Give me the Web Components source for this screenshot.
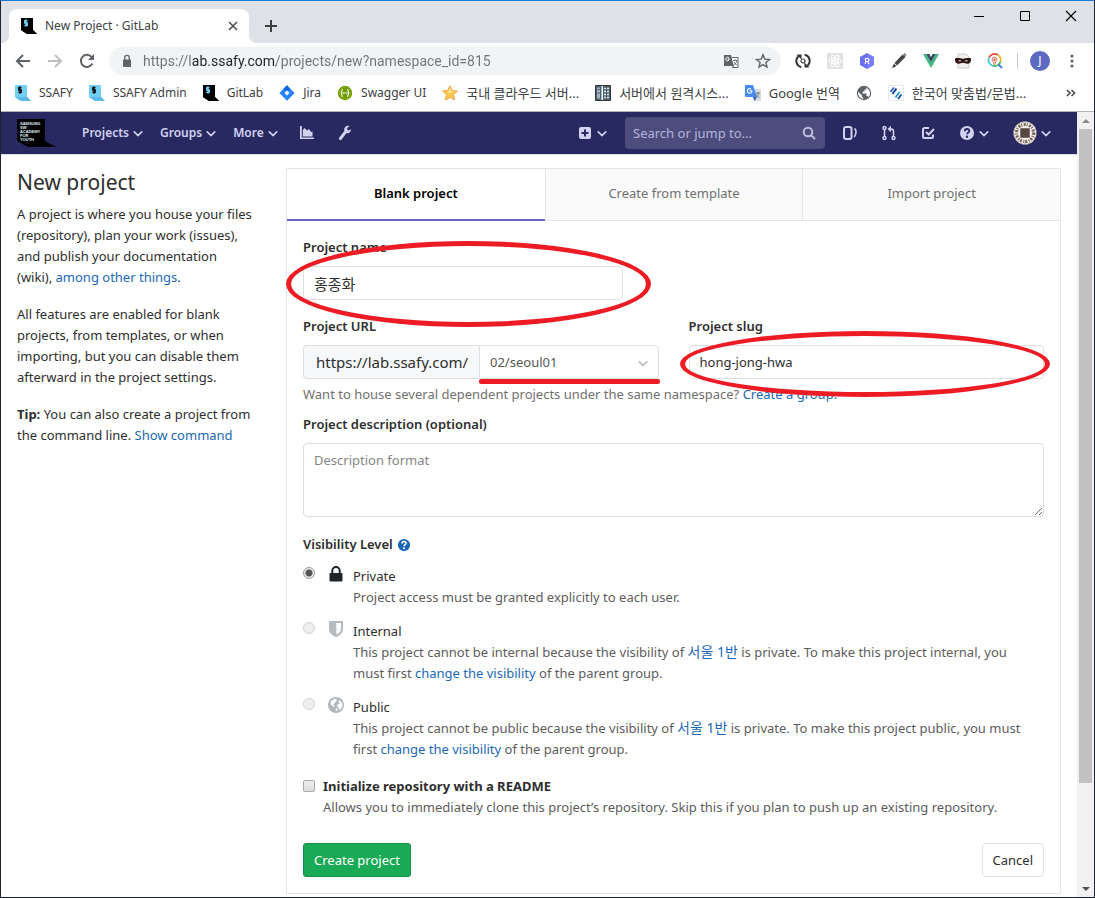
<!DOCTYPE html>
<html lang="en">
<head>
<meta charset="utf-8">
<title>New Project · GitLab</title>
<style>
html, body { margin: 0; }
body {
  font-family: "Noto Sans", "Noto Sans CJK KR", sans-serif;
  font-size: 13px; line-height: 21px; color: #2e2e2e; background: #fff;
}
</style>
</head>
<body>
<browser-window>
  <tab-strip slot="chrome"></tab-strip>
  <address-bar slot="chrome"></address-bar>
  <bookmark-bar slot="chrome"></bookmark-bar>
  <gl-navbar></gl-navbar>
  <gl-layout>
    <gl-intro slot="aside"></gl-intro>
    <gl-panel>
      <gl-project-form></gl-project-form>
    </gl-panel>
  </gl-layout>
</browser-window>

<script>
const define = (name, html) => {
  const template = document.createElement('template');
  template.innerHTML = html;
  customElements.define(name, class extends HTMLElement {
    constructor() {
      super();
      this.attachShadow({ mode: 'open' }).append(template.content.cloneNode(true));
    }
  });
};

/* ---------- icons ---------- */
const ssafy = (bg, fg, shade) => `<path d="M0 0h12v12l4 4H6l-6-4z" fill="${bg}"/><path d="M0 12h12l4 4H6z" fill="${shade}"/><path d="M6.500 2.700H3.700v2.300h2.600v2.400H3.300M5 1.300v7.500" fill="none" stroke="${fg}" stroke-width="1.300"/>`;
const ICONS = {
  ssafyDark: ['0 0 16 16', ssafy('#000', '#6fd0f5', '#000')],
  ssafyLight: ['0 0 16 16', ssafy('#6fcff6', '#111', '#5bb9e8')],
  x: ['0 0 16 16', '<path d="M4 4l8 8M12 4l-8 8" stroke="#4a4d51" stroke-width="1.600"/>'],
  plus: ['0 0 16 16', '<path d="M8 2v12M2 8h12" stroke="#3c4043" stroke-width="2"/>'],
  min: ['0 0 16 16', '<path d="M3 8.500h10" stroke="#000"/>'],
  max: ['0 0 16 16', '<path d="M3.500 3.500h9v9h-9z" fill="none" stroke="#000"/>'],
  close: ['0 0 16 16', '<path d="M3 3l10 10M13 3L3 13" stroke="#000" stroke-width="1.100"/>'],
  back: ['0 0 16 16', '<path d="M15 8H2.500M8 2L2 8l6 6" fill="none" stroke="#5f6368" stroke-width="2"/>'],
  fwd: ['0 0 16 16', '<path d="M1 8h12.500M8 2l6 6-6 6" fill="none" stroke="#bcbec1" stroke-width="2"/>'],
  reload: ['0 0 16 16', '<path d="M13.300 10.500A6 6 0 1 1 12.500 4" fill="none" stroke="#5f6368" stroke-width="2"/><path d="M15 1v6H9z" fill="#5f6368"/>'],
  padlock: ['0 0 16 16', '<rect x="4" y="6.500" width="8" height="7.500" rx=".8" fill="#5f6368"/><path d="M5.700 7V4.700a2.300 2.300 0 0 1 4.600 0V7" fill="none" stroke="#5f6368" stroke-width="1.300"/>'],
  translate: ['0 0 16 16', '<path d="M1 2h7l3 11H1z" fill="#5f6368"/><path d="M8.500 4.500H15v10H9l2-1.500" fill="#fff" stroke="#5f6368"/><path d="M6.800 6H5.200v1.200h.8A1.800 1.800 0 1 1 6 5" fill="none" stroke="#fff"/><path d="M10 7.500h4.500M12.300 6.500v1M13.700 8c-.5 2-1.500 3-3 4M11 9c.5 1.500 1.500 2.500 3 3" fill="none" stroke="#5f6368" stroke-width=".9"/>'],
  star: ['0 0 16 16', '<path d="M8 1.800l1.800 4.300 4.700.4-3.600 3 1.100 4.600L8 11.600l-4 2.500 1.100-4.600-3.600-3 4.700-.4z" fill="none" stroke="#5f6368" stroke-width="1.400"/>'],
  sync: ['0 0 16 16', '<path d="M6.300 14.200A6.300 6.300 0 0 1 3.500 3.300M9.700 1.800a6.300 6.300 0 0 1 2.800 10.900" fill="none" stroke="#333" stroke-width="2"/><path d="M1.500 1.500h5V6.500zM14.500 14.500h-5V9.500z" fill="#333"/><circle cx="8" cy="8" r="2" fill="none" stroke="#444" stroke-width="1.200"/>'],
  react: ['0 0 16 16', '<path d="M0 0h16v16H0z" fill="#e2e2e2"/><g fill="none" stroke="#fff"><ellipse cx="8" cy="8" rx="6.300" ry="2.400"/><ellipse cx="8" cy="8" rx="6.300" ry="2.400" transform="rotate(60 8 8)"/><ellipse cx="8" cy="8" rx="6.300" ry="2.400" transform="rotate(120 8 8)"/></g><circle cx="8" cy="8" r="1.300" fill="#fff"/>'],
  hex: ['0 0 16 16', '<path d="M8 0l7 4v8l-7 4-7-4V4z" fill="#6a6ff2"/><path d="M8 0l7 4v8l-7 4z" fill="#8287ff" opacity=".6"/><path d="M6.500 11V5.500h2a1.400 1.400 0 0 1 0 3h-2M8.500 8.500L10 11" fill="none" stroke="#fff" stroke-width="1.200"/>'],
  pen: ['0 0 16 16', '<path d="M11.500 1.500l3 2.500L6 12.500 3.500 10z" fill="#444"/><path d="M13.500 0l2 2-1 1.500-2.500-2z" fill="#777"/><path d="M3 10.700L5.300 13 .8 15.300z" fill="#333"/>'],
  vue: ['0 0 16 16', '<path d="M0 1h3.300L8 9.200 12.700 1H16L8 15z" fill="#41b883"/><path d="M3.300 1h3L8 4l1.700-3h3L8 9.200z" fill="#35495e"/>'],
  mask: ['0 0 16 16', '<path d="M3 1h8l3 3v11H3z" fill="#f0f0f0" stroke="#ccc"/><path d="M0 5.500c3-1.200 5 .2 8 .2s5-1.400 8-.2c.3 3-.8 5-3 5.300-2 .2-3.500-1-5-1s-3 1.200-5 1C.8 10.500-.3 8.500 0 5.500z" fill="#2b1313"/><path d="M3 8.200c1.200-1.200 2.400-1 3.500 0zM9.500 8.200c1.200-1 2.400-1.200 3.500 0z" fill="#fff"/>'],
  lens: ['0 0 16 16', '<g fill="none" stroke-width="1.800"><path d="M2 4.500A6.200 6.200 0 0 1 11 2" stroke="#ea4c3d"/><path d="M11 2a6.200 6.200 0 0 1 2.500 6.500" stroke="#f6b829"/><path d="M2 4.500A6.200 6.200 0 0 0 6 13" stroke="#42c6d8"/><path d="M6 13a6.200 6.200 0 0 0 7.500-4.500" stroke="#57b957"/><path d="M11.500 11.500l3.500 3.500" stroke="#3c82e8" stroke-width="2"/></g><path d="M5 6L7.500 12l2.500-6a2.600 2.600 0 0 0-5 0z" fill="#f6d7cf" stroke="#d55a48" stroke-width=".8"/><circle cx="7.500" cy="6.500" r="1" fill="#d55a48"/>'],
  kebab: ['0 0 16 16', '<g fill="#5f6368"><circle cx="8" cy="3" r="1.600"/><circle cx="8" cy="8" r="1.600"/><circle cx="8" cy="13" r="1.600"/></g>'],
  jira: ['0 0 16 16', '<path d="M8 .3L15.700 8 8 15.700.3 8z" fill="#2684ff"/><path d="M8 .3L11 4 8 6 4.300 4z" fill="#1264e0"/><path d="M8 5.600L10.400 8 8 10.400 5.600 8z" fill="#fff"/>'],
  swagger: ['0 0 16 16', '<circle cx="8" cy="8" r="7.200" fill="#6d9a00"/><circle cx="8" cy="8" r="5.800" fill="none" stroke="#85b510" stroke-width=".8"/><path d="M6 4.500c-2 0-.5 3.500-2.300 3.500C5.500 8 4 11.500 6 11.500M10 4.500c2 0 .5 3.500 2.300 3.500-1.800 0-.3 3.500-2.300 3.500" fill="none" stroke="#fff" stroke-width="1.100"/><path d="M5.600 8h5" stroke="#fff" stroke-width="1.300" stroke-dasharray="1.200 .7"/>'],
  gold: ['0 0 16 16', '<path d="M8 .8l2.200 4.600 5.300.6-4 3.600 1.200 5.400L8 12.400 3.300 15l1.200-5.400-4-3.600 5.300-.6z" fill="#fbc64c" stroke="#e29a3a" stroke-width=".8"/><path d="M8 3l1.300 3.500 3.500.5-6.800 1z" fill="#ffe6a0"/>'],
  rack: ['0 0 16 16', '<path d="M.5.500h15v15H.5z" fill="#4d6270" stroke="#333"/><path d="M6.500 1h1.500v14H6.500z" fill="#fff"/><path d="M2 2.500h3v11H2z" fill="#9fb2bd"/><path d="M9 3.500h2M12 3.500h2M9 6.500h2M12 6.500h2M9 9.500h2M12 9.500h2M9 12.500h2M12 12.500h2" stroke="#dfe7eb" stroke-width="1.600"/><path d="M2.800 4.500h1.500M2.800 8h1.500" stroke="#26333b"/>'],
  gtrans: ['0 0 16 16', '<path d="M7 4h9v12H9z" fill="#dadce0"/><path d="M0 0h8l4 12H1a1 1 0 0 1-1-1z" fill="#4a8af4"/><path d="M8 12h4l-2.500 4z" fill="#2f5fc4"/><path d="M7 5.800H4.700M7 5.800A2.300 2.300 0 1 1 6 4" fill="none" stroke="#fff" stroke-width="1.100"/><path d="M10.500 8H15M12.800 7v1M14 8c-.5 2-1.500 3-2.500 4M11.500 9.500c.7 1.500 1.500 2.300 3 3" fill="none" stroke="#69757d" stroke-width=".9"/>'],
  globe: ['0 0 16 16', '<circle cx="8" cy="8" r="7.200" fill="#5f6368"/><path d="M9.500 2.500L11 4.500H8.500v2H6.500v2h4V11c1.200 0 1.800.5 2 1.300A6 6 0 0 0 9.500 2.500zM2.200 6.800L6 10.500v1.200l1.300 1.300v1A6 6 0 0 1 2.200 6.800z" fill="#fff"/>'],
  spell: ['0 0 16 16', '<path d="M.5.500h15v15H.5z" fill="#fff" stroke="#e8e8e8"/><g stroke-width="2"><path d="M2.500 7l3.500-4.500" stroke="#2f6fd0"/><path d="M4.500 9l4-5.500" stroke="#223f86"/><path d="M7.500 12.500l4-5.500" stroke="#2799cf"/><path d="M10 14l3.500-4.500" stroke="#2450a0"/></g>'],
  more: ['0 0 16 16', '<path d="M5 5l3 3-3 3M9.500 5l3 3-3 3" fill="none" stroke="#4d5156" stroke-width="1.700"/>'],
  down: ['0 0 16 16', '<path d="M3 6.500L8 11.500l5-5" fill="none" stroke="currentColor" stroke-width="2.200" stroke-linecap="round"/>'],
  chart: ['0 0 16 16', '<path d="M1 1h1.800v11.500H15V14H1z" fill="currentColor"/><path d="M3.800 11.500V5L5.500 3l2.500 2.500L10 4l2 3 1.500-.5v5z" fill="currentColor"/>'],
  wrench: ['0 0 16 16', '<path d="M14 4.200l-2.500 1.300-1.400-1L10.200 3 12.600 1A4 4 0 0 0 7.300 6L2.300 12.600a1.500 1.500 0 0 0 .2 2.200 1.500 1.500 0 0 0 2.100-.3L9.300 8.300A4 4 0 0 0 14 4.200z" fill="currentColor"/>'],
  plusSq: ['0 0 16 16', '<path fill-rule="evenodd" d="M4 2h8a2 2 0 0 1 2 2v8a2 2 0 0 1-2 2H4a2 2 0 0 1-2-2V4a2 2 0 0 1 2-2zm3 2.500V7H4.500v2H7v2.500h2V9h2.500V7H9V4.500z" fill="currentColor"/>'],
  search: ['0 0 16 16', '<circle cx="7" cy="7" r="4.300" fill="none" stroke="currentColor" stroke-width="2"/><path d="M10.500 10.500l3 3" stroke="currentColor" stroke-width="2" stroke-linecap="round"/>'],
  issues: ['0 0 16 16', '<rect x="2" y="2" width="7.500" height="12" rx="2" fill="none" stroke="currentColor" stroke-width="2"/><path d="M12.500 3.500c1.500 1 1.800 2 1.500 4-.2 2-.8 3.200-1.800 4.500" fill="none" stroke="currentColor" stroke-width="1.600"/>'],
  merge: ['0 0 16 16', '<g fill="none" stroke="currentColor" stroke-width="1.500"><circle cx="3.500" cy="3" r="1.500"/><circle cx="3.500" cy="13" r="1.500"/><circle cx="12.500" cy="13" r="1.500"/><path d="M3.500 4.500v7M12.500 11.500V6.500a2.500 2.500 0 0 0-2.500-2.500H8"/></g><path d="M10 .8v6.400L6.500 4z" fill="currentColor"/>'],
  todo: ['0 0 16 16', '<path d="M9 3H4.500A1.500 1.500 0 0 0 3 4.500v7A1.500 1.500 0 0 0 4.500 13h7a1.500 1.500 0 0 0 1.500-1.500V9.500M6 7l2.700 2.500L14 4" fill="none" stroke="currentColor" stroke-width="2"/>'],
  help: ['0 0 16 16', '<circle cx="8" cy="8" r="7" fill="currentColor"/><path d="M5.800 6.300C5.800 4.800 6.800 4 8 4s2.300.8 2.300 2c0 1.500-2.200 1.500-2.200 3.300" fill="none" stroke="var(--mark, #fff)" stroke-width="1.800"/><circle cx="8" cy="11.700" r="1.200" fill="var(--mark, #fff)"/>'],
  avatar: ['0 0 24 24', '<circle cx="12" cy="12" r="11.500" fill="#efeae6"/><circle cx="12" cy="12" r="8.500" fill="none" stroke="#75635a" stroke-width="3" stroke-dasharray="2 1 1 1.500"/><circle cx="12" cy="12" r="11" fill="none" stroke="#9a8e86" stroke-width="1" stroke-dasharray="2 2"/><path d="M7 7h10v10H7z" fill="#5b463f" stroke="#fff" stroke-width=".5"/>'],
  lock: ['0 0 16 16', '<path d="M1.500 8a1 1 0 0 1 1-1h11a1 1 0 0 1 1 1v6.500a1 1 0 0 1-1 1h-11a1 1 0 0 1-1-1z" fill="#1f2429"/><path d="M4.300 7.500V4.800a3.700 3.700 0 0 1 7.400 0v2.700" fill="none" stroke="#1f2429" stroke-width="2"/>'],
  shield: ['0 0 16 16', '<path d="M2 0h12a1 1 0 0 1 1 1v7c0 4-3 6.500-7 8-4-1.500-7-4-7-8V1a1 1 0 0 1 1-1z" fill="#b5babf"/><path d="M8.300 2H13v6c0 2.700-1.800 4.300-4.700 5.700z" fill="#fff"/>'],
  earth: ['0 0 16 16', '<circle cx="8" cy="8" r="8" fill="#b1b6ba"/><path d="M6 2l3-.5L8 3l1 .8L7.500 5 6.500 6.500 5 7l1.500 1.500L6 10 4 8.500 2.500 6.500 2.800 4.500zM11 3l3 2.500.7 3L13 12l-1.500 1-1-2.500L9 9l1-2 2-.5L10.500 5zM8 11l2 1-1.500 2.500-1-1.500z" fill="#fff"/>'],
};
customElements.define('ui-icon', class extends HTMLElement {
  constructor() { super(); this.attachShadow({ mode: 'open' }); }
  connectedCallback() {
    const [box, body] = ICONS[this.getAttribute('name')];
    const size = this.getAttribute('size') || 16;
    this.shadowRoot.innerHTML = `<style>:host{display:inline-flex;flex:none}svg{display:block}</style>
      <svg viewBox="${box}" width="${size}" height="${size}" aria-hidden="true">${body}</svg>`;
  }
});

const RESET = `
  *, ::before, ::after { box-sizing: border-box; }
  button { font: inherit; color: inherit; background: none; border: 0; padding: 0; cursor: pointer;
    display: inline-flex; align-items: center; justify-content: center; }
  a { color: #1b69b6; text-decoration: none; }
  input, select, textarea { font: inherit; color: inherit; }
  p, h1, ul { margin: 0; padding: 0; list-style: none; }`;

/* ---------- browser window ---------- */
define('browser-window', `<style>${RESET}
  :host { display: flex; flex-direction: column; box-sizing: border-box; min-height: 100vh;
    border: 1px solid #20242c; border-top-color: #1a7fd4; background: #fff; }
  .view { flex: 1; display: grid; grid-template-columns: minmax(0, 1fr) 17px; }
</style>
<slot name="chrome"></slot>
<div class="view"><div><slot></slot></div><scroll-rail></scroll-rail></div>`);

define('scroll-rail', `<style>
  :host { display: flex; flex-direction: column; align-items: center; background: #f1f1f1; }
  i { width: 0; border: 4px solid transparent; }
  .up { border-top: 0; border-bottom-color: #8b8b8b; margin: 7px 0 6px; }
  .down { border-bottom: 0; border-top-color: #505050; margin: 6px 0; }
  .track { flex: 1; align-self: stretch; display: grid; grid-template-rows: 87fr 13fr; }
  .thumb { background: #c1c1c1; margin: 0 2px; }
</style><i class="up"></i><div class="track"><div class="thumb"></div></div><i class="down"></i>`);

define('tab-strip', `<style>${RESET}
  :host { display: flex; align-items: flex-start; background: #dee1e6; height: 42px; padding-left: 8px;
    font-size: 12px; line-height: 18px; color: #3c4043; }
  .tab { position: relative; width: 240px; height: 34px; margin-top: 8px; padding: 0 8px 0 12px; display: flex;
    align-items: center; gap: 8px; background: #fff; border-radius: 8px 8px 0 0; }
  .tab::before, .tab::after { content: ""; position: absolute; bottom: 0; width: 8px; height: 8px; }
  .tab::before { right: 100%; background: radial-gradient(circle at 0 0, transparent 8px, #fff 8px); }
  .tab::after { left: 100%; background: radial-gradient(circle at 100% 0, transparent 8px, #fff 8px); }
  .title { flex: 1; }
  .new { width: 44px; height: 50px; }
  .controls { margin-left: auto; display: flex; }
  .controls button { width: 46px; height: 29px; }
</style>
<div class="tab"><ui-icon name="ssafyDark"></ui-icon><span class="title">New Project · GitLab</span>
  <button aria-label="Close tab"><ui-icon name="x"></ui-icon></button></div>
<button class="new" aria-label="New tab"><ui-icon name="plus"></ui-icon></button>
<div class="controls">
  <button aria-label="Minimize"><ui-icon name="min"></ui-icon></button>
  <button aria-label="Maximize"><ui-icon name="max"></ui-icon></button>
  <button aria-label="Close"><ui-icon name="close"></ui-icon></button>
</div>`);

define('address-bar', `<style>${RESET}
  :host { display: flex; align-items: center; height: 36px; padding: 0 6px; }
  button { width: 32px; height: 28px; flex: none; }
  .pill { flex: 1; display: flex; align-items: center; margin: 0 6px; padding: 0 2px 0 10px; height: 28px;
    border-radius: 14px; background: #f1f3f4; }
  input { flex: 1; min-width: 0; border: 0; outline: 0; padding: 0; margin-left: 8px; height: 28px;
    font-family: Roboto, sans-serif; font-size: 14px;
    -webkit-text-fill-color: transparent; -webkit-background-clip: text; background-clip: text; color: #5f6368;
    background-image: linear-gradient(90deg, #6f7377 48px, #202124 48px 133px, #6f7377 133px); }
  .rule { width: 1px; height: 16px; margin: 0 6px; background: #c9ccd1; }
  .me { width: 20px; height: 20px; margin: 0 6px; border-radius: 50%; background: #5c6bc0; color: #fff; font-size: 12px; line-height: 20px; }
</style>
<button aria-label="Back"><ui-icon name="back"></ui-icon></button>
<button aria-label="Forward"><ui-icon name="fwd"></ui-icon></button>
<button aria-label="Reload"><ui-icon name="reload"></ui-icon></button>
<div class="pill"><ui-icon name="padlock"></ui-icon>
  <input aria-label="Address" value="https://lab.ssafy.com/projects/new?namespace_id=815">
  <button aria-label="Translate"><ui-icon name="translate"></ui-icon></button>
  <button aria-label="Bookmark"><ui-icon name="star"></ui-icon></button></div>
<button aria-label="Sync"><ui-icon name="sync"></ui-icon></button>
<button aria-label="React tools"><ui-icon name="react"></ui-icon></button>
<button aria-label="R tools"><ui-icon name="hex"></ui-icon></button>
<button aria-label="Pen"><ui-icon name="pen"></ui-icon></button>
<button aria-label="Vue tools"><ui-icon name="vue"></ui-icon></button>
<button aria-label="Mask"><ui-icon name="mask"></ui-icon></button>
<button aria-label="Lens"><ui-icon name="lens"></ui-icon></button>
<span class="rule"></span>
<button class="me" aria-label="Profile">J</button>
<button aria-label="Menu"><ui-icon name="kebab"></ui-icon></button>`);

define('bookmark-bar', `<style>${RESET}
  :host { display: flex; align-items: center; height: 28px; padding: 0 16px 4px 14px; gap: 16px;
    border-bottom: 1px solid #b3b3b3; font-size: 12px; line-height: 18px; }
  a { display: inline-flex; align-items: center; gap: 8px; color: #3c4043; white-space: nowrap; }
  a[lang] { font-size: 13px; }
  button { margin-left: auto; }
</style>
<a href="#"><ui-icon name="ssafyLight"></ui-icon>SSAFY</a>
<a href="#"><ui-icon name="ssafyLight"></ui-icon>SSAFY Admin</a>
<a href="#"><ui-icon name="ssafyDark"></ui-icon>GitLab</a>
<a href="#"><ui-icon name="jira"></ui-icon>Jira</a>
<a href="#"><ui-icon name="swagger"></ui-icon>Swagger UI</a>
<a href="#" lang="ko"><ui-icon name="gold"></ui-icon>국내 클라우드 서버...</a>
<a href="#" lang="ko"><ui-icon name="rack"></ui-icon>서버에서 원격시스...</a>
<a href="#" lang="ko"><ui-icon name="gtrans"></ui-icon>Google 번역</a>
<a href="#" aria-label="Site"><ui-icon name="globe"></ui-icon></a>
<a href="#" lang="ko"><ui-icon name="spell"></ui-icon>한국어 맞춤법/문법...</a>
<button aria-label="More bookmarks"><ui-icon name="more"></ui-icon></button>`);

/* ---------- GitLab page ---------- */
define('gl-navbar', `<style>${RESET}
  :host { display: flex; align-items: center; height: 42px; padding: 0 25px 0 16px; background: #292961;
    color: #d1d1f0; font-size: 12px; line-height: 18px; --mark: #292961; box-shadow: 0 1px #dfdfdf; }
  button { gap: 3px; font-weight: 600; white-space: nowrap; }
  .menus, .tools { display: flex; align-items: center; }
  .menus { margin-left: 26px; gap: 16px; }
  .links { display: flex; gap: 22px; margin-left: 20px; }
  .tools { margin-left: auto; gap: 23px; }
  form { display: flex; align-items: center; width: 200px; height: 32px; margin: 0 -6px; padding: 0 8px;
    border-radius: 4px; background: #4d4d7d; color: #bdbddf; }
  input { flex: 1; min-width: 0; border: 0; outline: 0; padding: 0; background: none; font-size: 13px; }
  input::placeholder { color: #b4b4d8; opacity: 1; }
  .logo { display: flex; }
  .logo text { font: 700 4px "Liberation Sans", sans-serif; fill: #dff1f8; }
  a { color: inherit; display: inline-flex; }
</style>
<a class="logo" href="#" aria-label="Home"><svg width="39" height="28" viewBox="0 0 39 28"><path d="M0 0h28v22l11 6H11L0 22z" fill="#000"/>
  <text x="3" y="6">SAMSUNG</text><text x="3" y="10">SW</text><text x="3" y="14">ACADEMY</text><text x="3" y="18">FOR</text><text x="3" y="22">YOUTH</text></svg></a>
<div class="menus">
  <button>Projects <ui-icon name="down" size="12"></ui-icon></button>
  <button>Groups <ui-icon name="down" size="12"></ui-icon></button>
  <button>More <ui-icon name="down" size="12"></ui-icon></button>
</div>
<div class="links">
  <a href="#" aria-label="Statistics"><ui-icon name="chart"></ui-icon></a>
  <a href="#" aria-label="Admin"><ui-icon name="wrench"></ui-icon></a>
</div>
<div class="tools">
  <button aria-label="New"><ui-icon name="plusSq"></ui-icon><ui-icon name="down" size="12"></ui-icon></button>
  <form><input type="text" aria-label="Search" placeholder="Search or jump to..."><ui-icon name="search"></ui-icon></form>
  <a href="#" aria-label="Issues"><ui-icon name="issues"></ui-icon></a>
  <a href="#" aria-label="Merge requests"><ui-icon name="merge"></ui-icon></a>
  <a href="#" aria-label="Todos"><ui-icon name="todo"></ui-icon></a>
  <button aria-label="Help"><ui-icon name="help"></ui-icon><ui-icon name="down" size="12"></ui-icon></button>
  <button aria-label="Account"><ui-icon name="avatar" size="24"></ui-icon><ui-icon name="down" size="12"></ui-icon></button>
</div>`);

define('gl-layout', `<style>${RESET}
  :host { display: grid; grid-template-columns: minmax(0, 1fr) minmax(0, 3fr); padding: 14px 0 3px; }
  aside, main { padding: 0 16px; }
</style><aside><slot name="aside"></slot></aside><main><slot></slot></main>`);

define('gl-intro', `<style>${RESET}
  :host { display: block; white-space: nowrap; }
  h1 { font-size: 21px; line-height: 28px; font-weight: 400; margin-bottom: 8px; }
  p { margin-bottom: 16px; }
</style>
<h1>New project</h1>
<p>A project is where you house your files<br>(repository), plan your work (issues),<br>and publish your documentation<br>(wiki), <a href="#">among other things</a>.</p>
<p>All features are enabled for blank<br>projects, from templates, or when<br>importing, but you can disable them<br>afterward in the project settings.</p>
<p><b>Tip:</b> You can also create a project from<br>the command line. <a href="#">Show command</a></p>`);

define('gl-panel', `<style>${RESET}
  :host { display: block; border: 1px solid #e5e5e5; }
  nav { display: grid; grid-template-columns: repeat(3, 1fr); }
  a { display: flex; align-items: center; justify-content: center; height: 52px; padding-bottom: 2px; color: #707070;
    background: #fafafa; border-bottom: 1px solid #e5e5e5; border-left: 1px solid #e5e5e5; }
  a[aria-current] { background: #fff; color: #000; font-weight: 600; border-left: 0; border-bottom: 2px solid #6666c4; padding-bottom: 1px; }
</style>
<nav><a href="#" aria-current="page">Blank project</a><a href="#">Create from template</a><a href="#">Import project</a></nav>
<slot></slot>`);

define('gl-project-form', `<style>${RESET}
  :host { display: block; padding: 16px; }
  form { display: block; }
  label, .legend { display: block; }
  .lbl { font-weight: 600; margin-bottom: 8px; }
  .wrap { position: relative; }
  .control { display: block; width: 100%; height: 34px; padding: 0 10px; border: 1px solid #dfdfdf; border-radius: 4px;
    background: #fff; outline: 0; }
  .name { width: 320px; margin-bottom: 16px; }
  .name input { font-size: 15px; }
  .pair { display: grid; grid-template-columns: 1fr 1fr; gap: 30px; }
  .url { display: flex; }
  .prefix { flex: none; width: 176px; height: 34px; padding: 0 12px; line-height: 32px; font-size: 15px; background: #f7f8fa;
    border: 1px solid #dfdfdf; border-right: 0; border-radius: 4px 0 0 4px; white-space: nowrap; }
  .pick { position: relative; flex: 1; }
  select.control { appearance: none; border-radius: 0 4px 4px 0; color: #555; }
  .pick ui-icon { position: absolute; right: 10px; top: 12px; color: #bdbdbd; pointer-events: none; }
  .help { color: #707070; margin: 5px 0 9px; white-space: nowrap; }
  textarea.control { height: 74px; padding: 6px 10px; margin-bottom: 17px; resize: vertical; }
  textarea::placeholder { color: #868686; opacity: 1; }
  fieldset { border: 0; padding: 0; margin: 0; min-width: 0; }
  .legend { font-weight: 600; margin-bottom: 11px; display: flex; align-items: center; gap: 4px; }
  .legend a { display: inline-flex; }
  gl-link[lang] { font-size: 14px; line-height: 20px; }
  .actions { display: flex; justify-content: space-between; margin-top: 25px; }
  .btn { height: 34px; padding: 0 10px; border: 1px solid #e3e3e3; border-radius: 3px; background: #fff; }
  .go { background: #1aaa55; border-color: #168f48; color: #fff; }
  .ring, .line { position: absolute; pointer-events: none; z-index: 1; }
  .ring { border: 5px solid #ed1c24; border-radius: 50%; }
  .name .ring { inset: -25px -28px -27px -17px; }
  .slug .ring { inset: -14px -6px -18px -9px; }
  .line { left: 0; right: -1px; bottom: -5px; height: 5px; border-radius: 2px; background: #ed1c24; }
</style>
<form>
  <label class="lbl" for="name">Project name</label>
  <div class="wrap name"><input class="control" id="name" type="text" value="홍종화"><span class="ring"></span></div>
  <div class="pair">
    <div>
      <label class="lbl" for="ns">Project URL</label>
      <div class="url"><span class="prefix">https://lab.ssafy.com/</span>
        <span class="pick"><select class="control" id="ns"><option>02/seoul01</option></select>
          <ui-icon name="down" size="12"></ui-icon><span class="line"></span></span></div>
    </div>
    <div>
      <label class="lbl" for="slug">Project slug</label>
      <div class="wrap slug"><input class="control" id="slug" type="text" value="hong-jong-hwa"><span class="ring"></span></div>
    </div>
  </div>
  <p class="help">Want to house several dependent projects under the same namespace? <a href="#">Create a group.</a></p>
  <label class="lbl" for="desc">Project description (optional)</label>
  <textarea class="control" id="desc" placeholder="Description format"></textarea>
  <fieldset>
    <div class="legend">Visibility Level <a href="#" aria-label="Help"><ui-icon name="help" size="14"></ui-icon></a></div>
    <gl-level icon="lock" label="Private" checked>Project access must be granted explicitly to each user.</gl-level>
    <gl-level icon="shield" label="Internal" disabled>This project cannot be internal because the visibility of <gl-link lang="ko">서울 1반</gl-link> is private. To make this project internal, you<br>must first <gl-link>change the visibility</gl-link> of the parent group.</gl-level>
    <gl-level icon="earth" label="Public" disabled>This project cannot be public because the visibility of <gl-link lang="ko">서울 1반</gl-link> is private. To make this project public, you must<br>first <gl-link>change the visibility</gl-link> of the parent group.</gl-level>
  </fieldset>
  <gl-check label="Initialize repository with a README">Allows you to immediately clone this project’s repository. Skip this if you plan to push up an existing repository.</gl-check>
  <div class="actions"><button class="btn go" type="button">Create project</button><button class="btn" type="button">Cancel</button></div>
</form>`);

define('gl-link', `<style>${RESET} :host { display: inline; }</style><a href="#"><slot></slot></a>`);

customElements.define('gl-level', class extends HTMLElement {
  constructor() {
    super();
    this.attachShadow({ mode: 'open' }).innerHTML = `<style>${RESET}
      :host { display: grid; grid-template-columns: 25px 25px minmax(0, 1fr); margin-bottom: 13px; }
      input { appearance: none; width: 12px; height: 12px; margin: 1px 0 0; border: 1px solid #b0b0b0; border-radius: 50%;
        background: linear-gradient(#f0f0f0, #dedede); }
      input:checked { background: radial-gradient(circle, #555 3px, #e9e9e9 4px); border-color: #9b9b9b; }
      input:disabled { border-color: #d2d2d2; background: #efefef; }
      ui-icon { align-self: start; }
      label { display: block; }
      p { color: #5c5c5c; white-space: nowrap; }
    </style>
    <input type="radio" id="level" ${this.hasAttribute('checked') ? 'checked' : ''} ${this.hasAttribute('disabled') ? 'disabled' : ''}>
    <ui-icon name="${this.getAttribute('icon')}"></ui-icon>
    <div><label for="level">${this.getAttribute('label')}</label><p><slot></slot></p></div>`;
  }
});

customElements.define('gl-check', class extends HTMLElement {
  constructor() {
    super();
    this.attachShadow({ mode: 'open' }).innerHTML = `<style>${RESET}
      :host { display: grid; grid-template-columns: 20px minmax(0, 1fr); margin-top: 3px; }
      input { appearance: none; width: 12px; height: 12px; margin: 4px 0 0; border: 1px solid #a9a9a9; border-radius: 2px;
        background: linear-gradient(#efefef, #dcdcdc); }
      label { display: block; font-weight: 700; }
      p { color: #5c5c5c; white-space: nowrap; }
    </style>
    <input type="checkbox" id="opt">
    <div><label for="opt">${this.getAttribute('label')}</label><p><slot></slot></p></div>`;
  }
});
</script>
</body>
</html>
